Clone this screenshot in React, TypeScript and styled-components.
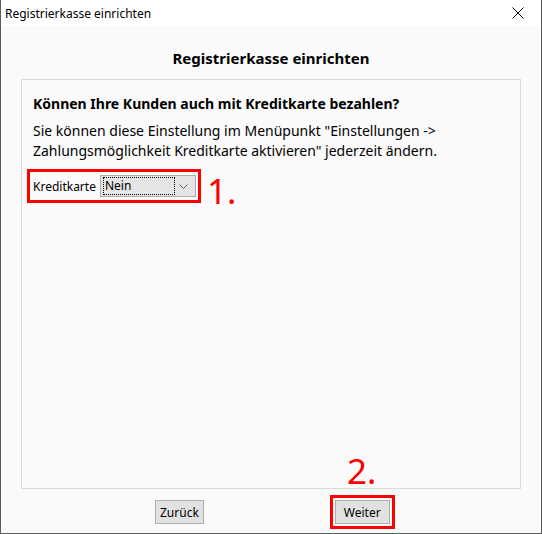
import React from 'react';
import styled, { createGlobalStyle } from 'styled-components';

const GlobalStyle = createGlobalStyle`
  html, body {
    margin: 0;
    padding: 0;
    background: #ffffff;
  }
  body {
    font-family: 'Noto Sans', 'Open Sans', sans-serif;
    color: #000;
  }
`;

const Window = styled.div`
  position: relative;
  width: 542px;
  height: 534px;
  box-sizing: border-box;
  border: 1px solid #5c5c5c;
  border-top: none;
  background: #fafafa;
  display: flex;
  flex-direction: column;
`;

const TitleBar = styled.div`
  height: 26px;
  background: #ffffff;
  display: flex;
  align-items: center;
  justify-content: space-between;
  padding: 0 0 0 4px;
  font-size: 12px;
`;

const CloseButton = styled.div`
  width: 46px;
  height: 26px;
  display: flex;
  align-items: center;
  justify-content: center;
`;

const Heading = styled.h1`
  margin: 0;
  height: 53px;
  display: flex;
  align-items: center;
  justify-content: center;
  padding-top: 10px;
  box-sizing: border-box;
  font-size: 15px;
  font-weight: 700;
`;

const Panel = styled.div`
  flex: 1;
  margin: 0 20px;
  border: 1px solid #d9d9d9;
  padding: 14px 11px 0 11px;
`;

const Question = styled.div`
  font-size: 14px;
  font-weight: 700;
  line-height: 20px;
`;

const Text = styled.div`
  font-size: 14px;
  line-height: 20px;
  margin-top: 7px;
`;

const FieldLine = styled.div`
  display: flex;
  align-items: flex-start;
  margin: 8px 0 0 -6px;
`;

const Marked = styled.div`
  display: flex;
  align-items: center;
  gap: 4px;
  box-sizing: border-box;
  border: 3px solid #ff0000;
  padding: 0 0 0 3px;
  height: 34px;
  width: 174px;
`;

const Label = styled.span`
  font-size: 12px;
`;

const Select = styled.div`
  width: 96px;
  height: 22px;
  box-sizing: border-box;
  background: #e5e5e5;
  border: 1px solid #acacac;
  display: flex;
  align-items: center;
  padding: 2px;
`;

const SelectValue = styled.div`
  flex: 1;
  height: 16px;
  border: 1px dotted #000;
  font-size: 12px;
  line-height: 16px;
  padding-left: 1px;
`;

const Chevron = styled.div`
  width: 18px;
  display: flex;
  justify-content: center;
`;

const Step = styled.span`
  color: #ff0000;
  font-size: 35px;
  line-height: 35px;
  margin-left: 6px;
  margin-top: 4px;
`;

const Footer = styled.div`
  height: 44px;
  display: flex;
  align-items: center;
  padding-top: 2px;
  box-sizing: border-box;
`;

const Button = styled.button<{ wide?: boolean }>`
  height: 24px;
  padding: 0 ${(props) => (props.wide ? '8px' : '4px')};
  background: #e1e1e1;
  border: 1px solid #adadad;
  font-family: inherit;
  font-size: 12px;
  color: #000;
`;

const BackSlot = styled.div`
  margin-left: 154px;
`;

const NextSlot = styled.div`
  margin-left: 126px;
  border: 3px solid #ff0000;
  padding: 2px;
`;

const StepTwo = styled.span`
  position: absolute;
  left: 346px;
  top: 451px;
  color: #ff0000;
  font-size: 35px;
  line-height: 40px;
`;

export default function App() {
  return (
    <>
      <GlobalStyle />
      <Window>
        <TitleBar>
          <span>Registrierkasse einrichten</span>
          <CloseButton>
            <svg width="12" height="12" viewBox="0 0 12 12">
              <path d="M0.5 0.5 L11.5 11.5 M11.5 0.5 L0.5 11.5" stroke="#000" strokeWidth="1" />
            </svg>
          </CloseButton>
        </TitleBar>
        <Heading>Registrierkasse einrichten</Heading>
        <Panel>
          <Question>Können Ihre Kunden auch mit Kreditkarte bezahlen?</Question>
          <Text>
            Sie können diese Einstellung im Menüpunkt "Einstellungen -&gt;
            <br />
            Zahlungsmöglichkeit Kreditkarte aktivieren" jederzeit ändern.
          </Text>
          <FieldLine>
            <Marked>
              <Label>Kreditkarte</Label>
              <Select>
                <SelectValue>Nein</SelectValue>
                <Chevron>
                  <svg width="9" height="5" viewBox="0 0 9 5">
                    <path d="M0.5 0.5 L4.5 4.5 L8.5 0.5" fill="none" stroke="#606060" strokeWidth="1" />
                  </svg>
                </Chevron>
              </Select>
            </Marked>
            <Step>1.</Step>
          </FieldLine>
        </Panel>
        <Footer>
          <BackSlot>
            <Button>Zurück</Button>
          </BackSlot>
          <NextSlot>
            <Button wide>Weiter</Button>
          </NextSlot>
        </Footer>
        <StepTwo>2.</StepTwo>
      </Window>
    </>
  );
}
